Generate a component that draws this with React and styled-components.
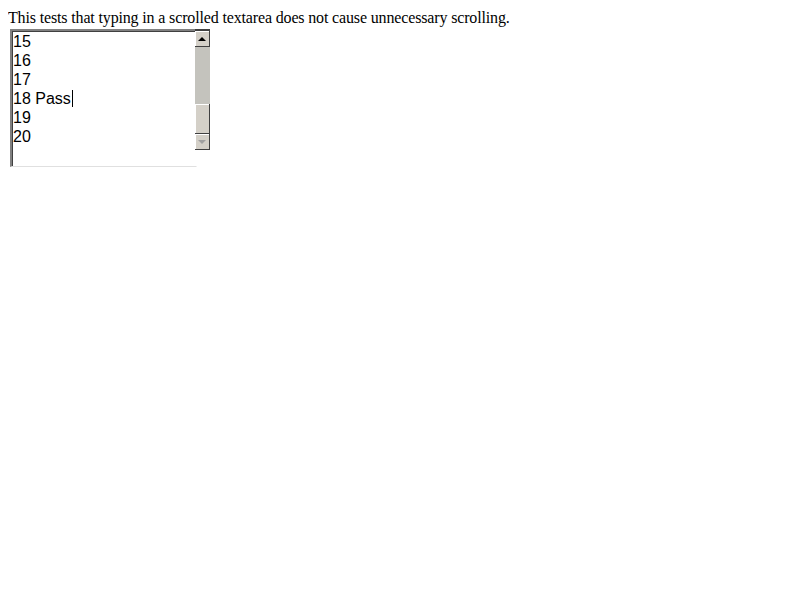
import React from "react";
import styled, { createGlobalStyle } from "styled-components";

const lines = ["15", "16", "17", "18 Pass", "19", "20"];

const App = () => (
  <>
    <Global />
    <Intro>This tests that typing in a scrolled textarea does not cause unnecessary scrolling.</Intro>
    <Field>
      <Area>
        {lines.map((line, i) => (
          <Line key={line}>
            {line}
            {i === 3 && <Caret />}
          </Line>
        ))}
      </Area>
      <Scrollbar>
        <ArrowButton>
          <Arrow $up />
        </ArrowButton>
        <Track>
          <Thumb />
        </Track>
        <ArrowButton>
          <Arrow $disabled />
        </ArrowButton>
      </Scrollbar>
    </Field>
  </>
);

export default App;

const Global = createGlobalStyle`
  body {
    margin: 8px;
    background: #fff;
    font-family: "Liberation Serif", serif;
  }
`;

const Intro = styled.div`
  font-size: 16px;
  line-height: 19px;
  letter-spacing: -0.15px;
  margin-bottom: 2px;
`;

const Field = styled.div`
  display: flex;
  align-items: flex-start;
  margin-left: 2px;
`;

const Area = styled.div`
  width: 183px;
  height: 134px;
  border-top: 2px solid #808080;
  border-left: 2px solid #808080;
  border-right: 1px solid transparent;
  border-bottom: 1px solid #e0e0e0;
  box-shadow: inset 1px 1px 0 #404040;
  padding: 1px 0 0 1px;
  box-sizing: content-box;
  font-family: "Liberation Sans", Arial, sans-serif;
  font-size: 16px;
  color: #000;
  margin-right: -2px;
`;

const Line = styled.div`
  display: flex;
  align-items: center;
  height: 19px;
  line-height: 19px;
`;

const Caret = styled.span`
  display: inline-block;
  width: 1px;
  height: 17px;
  background: #000;
  margin-left: 1px;
`;

const Scrollbar = styled.div`
  display: flex;
  flex-direction: column;
  width: 15px;
  height: 121px;
  border-top: 2px solid #404040;
  box-sizing: border-box;
  background: #fff;
`;

const ArrowButton = styled.div`
  display: flex;
  align-items: center;
  justify-content: center;
  height: 16px;
  background: #d4d0c8;
  border-right: 1px solid #404040;
  border-bottom: 1px solid #404040;
  box-shadow: inset 1px 1px 0 #fff;
  box-sizing: border-box;
`;

const Arrow = styled.span`
  width: 0;
  height: 0;
  border-left: 4px solid transparent;
  border-right: 4px solid transparent;
  ${({ $up, $disabled }) =>
    $up
      ? `border-bottom: 4px solid ${$disabled ? "#808080" : "#000"};`
      : `border-top: 4px solid ${$disabled ? "#a0a0a0" : "#000"};`}
`;

const Track = styled.div`
  flex: 1;
  display: flex;
  flex-direction: column;
  justify-content: flex-end;
  background: #c4c3bd;
`;

const Thumb = styled.div`
  height: 30px;
  background: #d4d0c8;
  border-right: 1px solid #404040;
  border-bottom: 1px solid #404040;
  box-shadow: inset 1px 1px 0 #fff;
  box-sizing: border-box;
`;
